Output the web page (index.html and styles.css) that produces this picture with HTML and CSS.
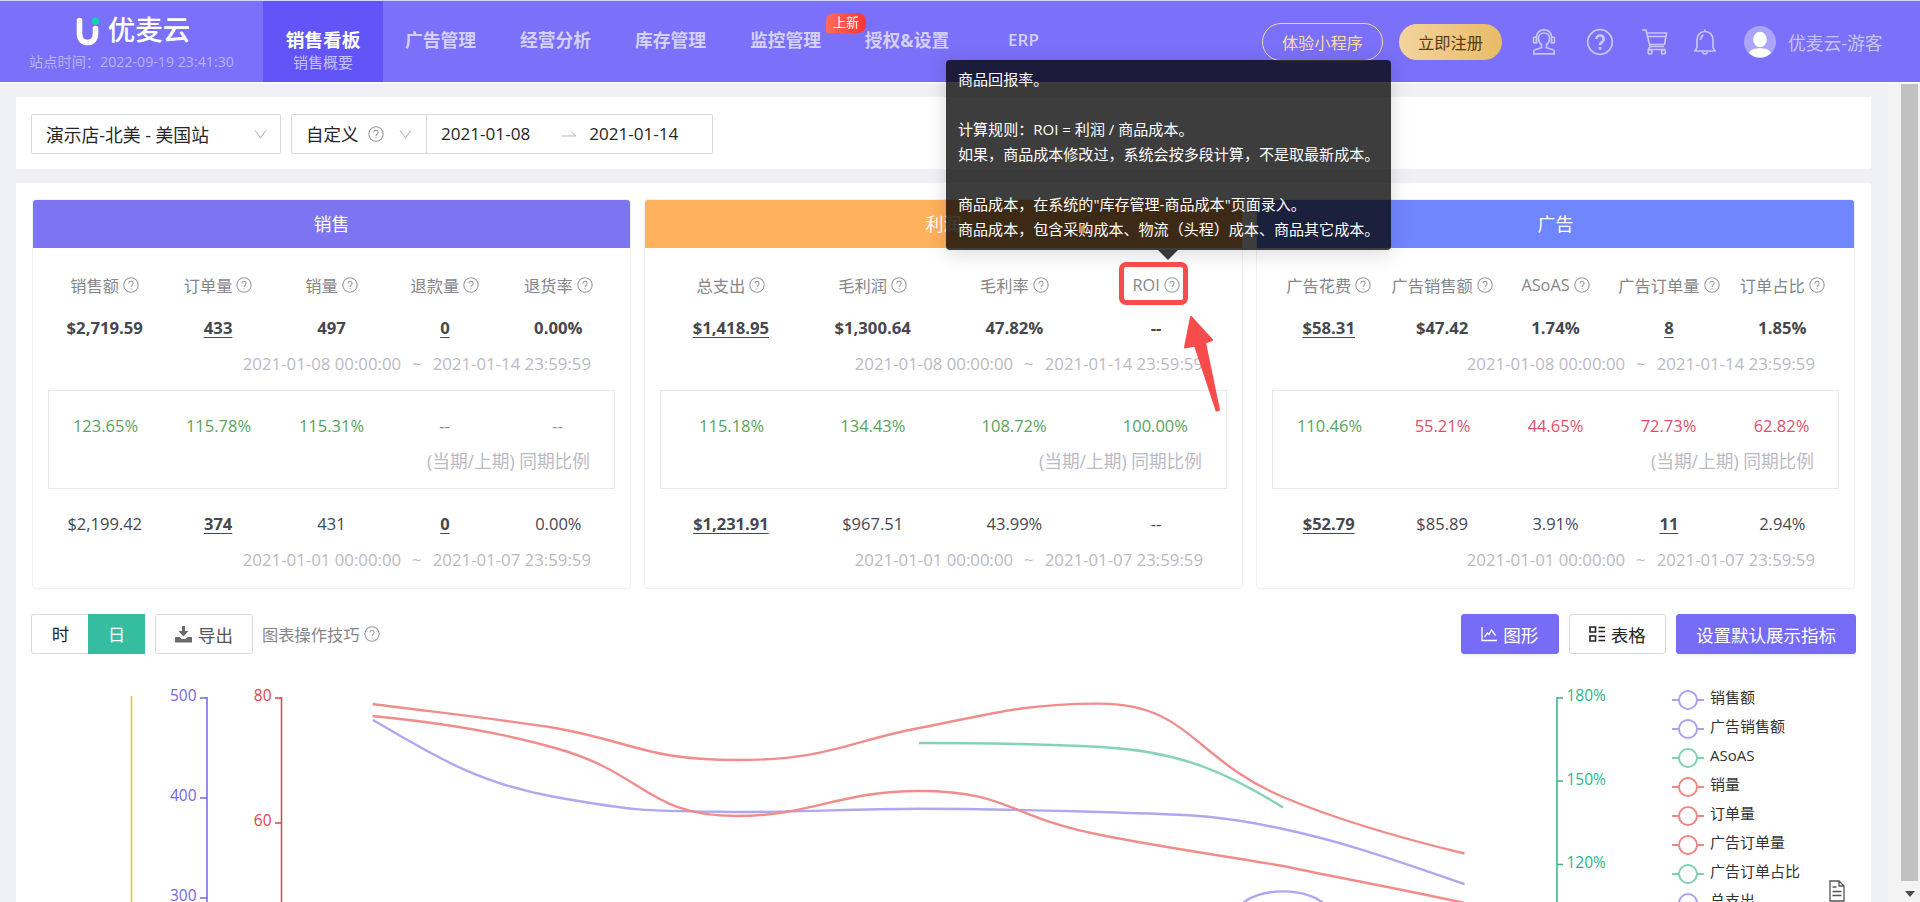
FILE: index.html
```html
<!DOCTYPE html>
<html lang="zh-CN">
<head>
    <meta charset="UTF-8">
    <meta name="viewport" content="width=device-width, initial-scale=1.0">
    <title>优麦云 - 销售看板</title>
    <link rel="stylesheet" href="styles.css">
</head>
<body>
    <svg class="symbols">
        <symbol id="help" viewBox="0 0 16 16">
            <circle cx="8" cy="8" r="7.2"/>
            <path d="M5.9 6.4a2.1 2.1 0 1 1 3.2 1.8C8.3 8.700 8 9.100 8 10"/>
            <path d="M8 11.200v1"/>
        </symbol>
        <symbol id="down" viewBox="0 0 14 10">
            <path d="M1 1l6 8 6-8"/>
        </symbol>
    </svg>

    <header class="header">
        <div class="brand">
            <div class="logo">
                <svg width="24" height="30" viewBox="0 0 24 30">
                    <path d="M3.500 3.500v13c0 5.500 3 9 8 9s8-3.500 8-9v-5" fill="none" stroke="#fff" stroke-width="5.600" stroke-linecap="round"/>
                    <circle cx="19.500" cy="4.200" r="3.600" fill="#10d3a6"/>
                </svg>
                <span>优麦云</span>
            </div>
            <div class="site-time">站点时间：2022-09-19 23:41:30</div>
        </div>
        <nav class="nav">
            <a class="nav-item active">销售看板<small>销售概要</small></a>
            <a class="nav-item">广告管理</a>
            <a class="nav-item">经营分析</a>
            <a class="nav-item">库存管理</a>
            <a class="nav-item">监控管理<span class="badge">上新</span></a>
            <a class="nav-item wide">授权&amp;设置</a>
            <a class="nav-item erp">ERP</a>
        </nav>
        <div class="header-right">
            <button class="btn-trial">体验小程序</button>
            <button class="btn-register">立即注册</button>
            <svg class="icon-service" width="24" height="28" viewBox="0 0 24 28">
                <path d="M9.500 16.500C7.300 15 6.500 13 6.500 10.500 6.500 7.200 8.500 5 12 5s5.500 2.200 5.500 5.500c0 2.500-.8 4.500-3 6v3.200l6.500 2c.9.300 1.200.8 1.200 1.600V25.800H1.800v-2.500c0-.8.300-1.300 1.200-1.600l6.500-2z"/>
                <path d="M4.500 9.500C4.500 4.500 7.500 1.800 12 1.800s7.500 2.700 7.500 7.700M4.500 9H3.200C2 9 1.500 9.800 1.500 11v2c0 1.200.5 2 1.700 2h1.300zM19.500 9h1.300c1.200 0 1.700.8 1.700 2v2c0 1.200-.5 2-1.700 2h-1.300z"/>
            </svg>
            <svg class="icon-question" width="28" height="28" viewBox="0 0 28 28">
                <circle cx="14" cy="14" r="12.300"/>
                <path d="M10.500 11a3.600 3.600 0 1 1 5.600 3c-1.500 1-2.100 1.700-2.100 3.200" stroke-width="2.800"/>
                <path d="M14 19v2.700" stroke-width="2.800"/>
            </svg>
            <svg class="icon-cart" width="26" height="28" viewBox="0 0 26 28">
                <path d="M0 2h4l4 16.500h14M5 5h19.500l-2 11.500H7.500M5.500 8.500H24M8 18.500l-1.500 3h17"/>
                <circle cx="8" cy="24" r="2"/>
                <circle cx="21.500" cy="24" r="2"/>
            </svg>
            <svg class="icon-bell" width="22" height="28" viewBox="0 0 22 28">
                <path d="M11 3.500c-4.800 0-8 3.500-8 8.500v7.500L1 23h20l-2-3.500V12c0-5-3.200-8.500-8-8.500zM11 1.500v2M8.500 24a2.600 2.600 0 0 0 5 0M6.500 12c0-2.500 1-4 3-5"/>
            </svg>
            <svg class="avatar" width="32" height="32" viewBox="0 0 32 32">
                <circle cx="16" cy="16" r="16" fill="#aaa5f8"/>
                <ellipse cx="16" cy="13.500" rx="6.800" ry="7.700" fill="#fff"/>
                <path d="M5 27c1.500-3.500 6-4.800 11-4.800S25.500 23.500 27 27c-3 3-6.800 4.500-11 4.500S8 30 5 27z" fill="#fff"/>
            </svg>
            <span class="user-name">优麦云-游客</span>
        </div>
    </header>

    <div class="page">
        <main class="main">
            <section class="filters">
                <div class="select store">
                    <span>演示店-北美 - 美国站</span>
                    <svg class="arrow-down"><use href="#down"/></svg>
                </div>
                <div class="select range">
                    <div class="range-type">
                        <span>自定义</span>
                        <svg class="help"><use href="#help"/></svg>
                        <svg class="arrow-down"><use href="#down"/></svg>
                    </div>
                    <div class="range-dates">
                        <span>2021-01-08</span>
                        <svg class="to" width="15" height="8" viewBox="0 0 15 8"><path d="M0 6h14L9.500 2"/></svg>
                        <span>2021-01-14</span>
                    </div>
                </div>
            </section>

            <section class="board">
                <div class="panels">
                    <div class="panel">
                        <h3 class="panel-title sale">销售</h3>
                        <div class="panel-body">
                            <div class="row labels">
                                <span>销售额<svg class="help"><use href="#help"/></svg></span>
                                <span>订单量<svg class="help"><use href="#help"/></svg></span>
                                <span>销量<svg class="help"><use href="#help"/></svg></span>
                                <span>退款量<svg class="help"><use href="#help"/></svg></span>
                                <span>退货率<svg class="help"><use href="#help"/></svg></span>
                            </div>
                            <div class="row values current">
                                <span>$2,719.59</span><span><a>433</a></span><span>497</span><span><a>0</a></span><span>0.00%</span>
                            </div>
                            <div class="date">2021-01-08 00:00:00<i>~</i>2021-01-14 23:59:59</div>
                            <div class="compare">
                                <div class="row up">
                                    <span>123.65%</span><span>115.78%</span><span>115.31%</span><span>--</span><span class="none">--</span>
                                </div>
                                <div class="ratio">(当期/上期) 同期比例</div>
                            </div>
                            <div class="row values">
                                <span>$2,199.42</span><span><a>374</a></span><span>431</span><span><a>0</a></span><span>0.00%</span>
                            </div>
                            <div class="date">2021-01-01 00:00:00<i>~</i>2021-01-07 23:59:59</div>
                        </div>
                    </div>

                    <div class="panel">
                        <h3 class="panel-title profit">利润</h3>
                        <div class="panel-body">
                            <div class="row labels">
                                <span>总支出<svg class="help"><use href="#help"/></svg></span>
                                <span>毛利润<svg class="help"><use href="#help"/></svg></span>
                                <span>毛利率<svg class="help"><use href="#help"/></svg></span>
                                <span>ROI<svg class="help"><use href="#help"/></svg></span>
                            </div>
                            <div class="row values current">
                                <span><a>$1,418.95</a></span><span>$1,300.64</span><span>47.82%</span><span>--</span>
                            </div>
                            <div class="date">2021-01-08 00:00:00<i>~</i>2021-01-14 23:59:59</div>
                            <div class="compare">
                                <div class="row up">
                                    <span>115.18%</span><span>134.43%</span><span>108.72%</span><span>100.00%</span>
                                </div>
                                <div class="ratio">(当期/上期) 同期比例</div>
                            </div>
                            <div class="row values">
                                <span><a>$1,231.91</a></span><span>$967.51</span><span>43.99%</span><span>--</span>
                            </div>
                            <div class="date">2021-01-01 00:00:00<i>~</i>2021-01-07 23:59:59</div>
                        </div>
                    </div>

                    <div class="panel">
                        <h3 class="panel-title ad">广告</h3>
                        <div class="panel-body">
                            <div class="row labels">
                                <span>广告花费<svg class="help"><use href="#help"/></svg></span>
                                <span>广告销售额<svg class="help"><use href="#help"/></svg></span>
                                <span>ASoAS<svg class="help"><use href="#help"/></svg></span>
                                <span>广告订单量<svg class="help"><use href="#help"/></svg></span>
                                <span>订单占比<svg class="help"><use href="#help"/></svg></span>
                            </div>
                            <div class="row values current">
                                <span><a>$58.31</a></span><span>$47.42</span><span>1.74%</span><span><a>8</a></span><span>1.85%</span>
                            </div>
                            <div class="date">2021-01-08 00:00:00<i>~</i>2021-01-14 23:59:59</div>
                            <div class="compare">
                                <div class="row down">
                                    <span class="up">110.46%</span><span>55.21%</span><span>44.65%</span><span>72.73%</span><span>62.82%</span>
                                </div>
                                <div class="ratio">(当期/上期) 同期比例</div>
                            </div>
                            <div class="row values">
                                <span><a>$52.79</a></span><span>$85.89</span><span>3.91%</span><span><a>11</a></span><span>2.94%</span>
                            </div>
                            <div class="date">2021-01-01 00:00:00<i>~</i>2021-01-07 23:59:59</div>
                        </div>
                    </div>
                </div>

                <div class="toolbar">
                    <div class="switch"><span>时</span><span class="on">日</span></div>
                    <button class="btn btn-export">
                        <svg width="17" height="17" viewBox="0 0 17 17"><path d="M7 0h3v5h3.500l-5 5.500-5-5.500H7zM0 11h4.500l2 2h4l2-2H17v5.500H0z" fill="#6b6b6b"/></svg>
                        导出
                    </button>
                    <span class="tips">图表操作技巧<svg class="help"><use href="#help"/></svg></span>
                    <div class="toolbar-right">
                        <button class="btn primary btn-view">
                            <svg width="16" height="15" viewBox="0 0 16 15"><path d="M1 0v13.500h15M3.500 10l3-4 1.500 1.500L10.500 3l4 5.500" fill="none" stroke="#fff" stroke-width="1.300"/></svg>
                            图形
                        </button>
                        <button class="btn btn-view">
                            <svg width="16" height="16" viewBox="0 0 16 16"><path d="M1 1h5.500v5H1zM1 10h5.500v5H1zM9.500 1.500H16M9.500 5.500H16M9.500 10.500H16M9.500 14.500H16" fill="none" stroke="#222" stroke-width="1.600"/></svg>
                            表格
                        </button>
                        <button class="btn primary btn-default">设置默认展示指标</button>
                    </div>
                </div>

                <div class="chart">
                    <svg class="plot" width="1640" height="229" viewBox="16 673 1640 229">
                        <path d="M131.500 696v206" stroke="#f0c30c" stroke-width="1.500"/>
                        <g stroke="#7467e0" fill="none" stroke-width="1.500">
                            <path d="M207 697v205M200 698h7M200 798h7M200 898h7"/>
                        </g>
                        <g stroke="#dd4344" fill="none" stroke-width="1.500">
                            <path d="M281.500 697v205M275 698h7M275 823h7"/>
                        </g>
                        <g stroke="#2bb68c" fill="none" stroke-width="1.500">
                            <path d="M1557 697v205M1557 698h6M1557 781h6M1557 864.500h6"/>
                        </g>
                        <g class="axis-text" text-anchor="end" fill="#7467e0">
                            <text x="196.500" y="701">500</text>
                            <text x="196.500" y="801">400</text>
                            <text x="196.500" y="901">300</text>
                        </g>
                        <g class="axis-text" text-anchor="end" fill="#dd4344">
                            <text x="271.500" y="701">80</text>
                            <text x="271.500" y="826">60</text>
                        </g>
                        <g class="axis-text" fill="#2bb68c">
                            <text x="1566.500" y="701">180%</text>
                            <text x="1566.500" y="785">150%</text>
                            <text x="1566.500" y="868">120%</text>
                        </g>
                        <g class="line">
                            <path class="c-purple" d="M373 720C434 756 480 784 555 797C640 812 646 811 737 812C810 812 846 809 919 808.700C992 808.700 1028 810 1101 812C1180 815 1210 813 1283 829C1345 842 1400 862 1464.500 884"/>
                            <path class="c-purple" d="M1240 906C1256 886.500 1310 886.500 1326 906"/>
                            <path class="c-green" d="M919 743C992 743 1040 744 1101 747C1180 751 1228 773 1283 807.500"/>
                            <path class="c-red" d="M372.500 704C425 711 500 719 555 728C634 742 646 760 737 760C828 760 846 742 919 728C992 714 1020 704 1098 703.600C1189 703 1192 758 1283 797C1340 821 1400 838 1464.500 853.500"/>
                            <path class="c-red" d="M372.500 716C434 722 500 732 555 748C646 773 646 816 737 816C810 816 840 791 919 791C1010 791 1010 818 1101 835C1160 847 1225 856 1283 866C1340 878 1400 889 1464.500 903"/>
                        </g>
                    </svg>
                    <ul class="legend">
                        <li class="c-purple"><i></i>销售额</li>
                        <li class="c-purple"><i></i>广告销售额</li>
                        <li class="c-green"><i></i>ASoAS</li>
                        <li class="c-red"><i></i>销量</li>
                        <li class="c-red"><i></i>订单量</li>
                        <li class="c-red"><i></i>广告订单量</li>
                        <li class="c-green"><i></i>广告订单占比</li>
                        <li class="c-purple"><i></i>总支出</li>
                    </ul>
                    <svg class="doc" width="16" height="22" viewBox="0 0 16 22">
                        <path d="M1 1h9l5 5v15H1zM10 1v5h5M3.500 7h4M3.500 11.500h9M3.500 15.500h9" fill="none" stroke="#555" stroke-width="1.300"/>
                    </svg>
                </div>
            </section>
        </main>
        <div class="scrollbar">
            <div class="thumb"></div>
            <svg width="10" height="6" viewBox="0 0 10 6"><path d="M0 0h10L5 6z" fill="#4d4d4d"/></svg>
        </div>
    </div>

    <!-- ROI 说明 -->
    <div class="tooltip">商品回报率。<br><br>计算规则：ROI = 利润 / 商品成本。<br>如果，商品成本修改过，系统会按多段计算，不是取最新成本。<br><br>商品成本，在系统的"库存管理-商品成本"页面录入。<br>商品成本，包含采购成本、物流（头程）成本、商品其它成本。</div>
    <div class="mark-box"></div>
    <svg class="mark-arrow" width="40" height="100" viewBox="1182 313 40 100">
        <path d="M1191 317L1212 340L1205 342.500L1219 410L1216.500 410.500L1195 345.500L1185 347.500Z" fill="#f84c4c" stroke="#f84c4c" stroke-width="2" stroke-linejoin="round"/>
    </svg>
</body>
</html>
```
FILE: styles.css
```css
* {
    box-sizing: border-box;
}
body {
    margin: 0;
    height: 902px;
    overflow: hidden;
    position: relative;
    font-family: 'Open Sans', 'Noto Sans CJK SC', sans-serif;
    font-size: 17.5px;
    color: #262626;
    background: #f0f1f4;
}
button {
    font-family: inherit;
    padding: 0;
    cursor: pointer;
}
.symbols {
    position: absolute;
    width: 0;
    height: 0;
}

/* header */
.header {
    display: flex;
    height: 82px;
    border-top: 1px solid #d5d6f8;
    background: #7a70f9;
    color: #fff;
}
.brand {
    width: 263px;
    text-align: center;
}
.logo {
    display: flex;
    align-items: center;
    justify-content: center;
    gap: 8px;
    height: 48px;
    padding-top: 10px;
    padding-left: 3px;
    font-size: 27.5px;
    line-height: 38px;
    font-weight: 500;
}
.logo svg {
    margin-top: 3px;
}
.site-time {
    font-size: 14.2px;
    line-height: 26px;
    color: #b9b4fc;
    white-space: nowrap;
}
.nav {
    display: flex;
}
.nav-item {
    position: relative;
    width: 115px;
    padding-top: 26px;
    text-align: center;
    font-size: 17.8px;
    line-height: 26px;
    font-weight: bold;
    color: #d3d0fd;
    white-space: nowrap;
}
.nav-item.active {
    width: 120px;
    background: #6255f8;
    color: #fff;
    font-size: 18.7px;
}
.nav-item small {
    display: block;
    font-size: 15px;
    line-height: 19px;
    font-weight: normal;
    color: #c5c1fd;
}
.nav-item.wide {
    width: 128px;
}
.nav-item.erp {
    width: 105px;
    font-size: 17px;
    font-weight: 600;
}
.badge {
    position: absolute;
    left: 98px;
    top: 12px;
    width: 40px;
    height: 20px;
    border-radius: 8px 8px 8px 1px;
    background: linear-gradient(90deg, #ff6b5c, #ff3434);
    color: #fff;
    font-size: 13px;
    line-height: 19px;
    font-weight: normal;
}
.header-right {
    display: flex;
    align-items: center;
    margin-left: auto;
    height: 82px;
    padding-right: 36px;
}
.header-right svg {
    fill: none;
    stroke: #c9c5fd;
    stroke-width: 1.7;
}
.header-right .avatar {
    stroke: none;
    margin-left: 28px;
}
.btn-trial {
    width: 121px;
    height: 38px;
    margin-right: 16px;
    border: 1px solid #f3d6a6;
    border-radius: 19px;
    background: none;
    color: #f8dba6;
    font-size: 16.25px;
}
.btn-register {
    width: 103px;
    height: 36px;
    margin-right: 30px;
    border: none;
    border-radius: 18px;
    background: linear-gradient(90deg, #f3d49e, #e9bb67);
    color: #573a12;
    font-size: 16.25px;
}
.icon-question {
    margin-left: 30px;
}
.icon-cart {
    margin-left: 28px;
}
.icon-bell {
    margin-left: 26px;
}
.user-name {
    width: 96px;
    margin-left: 12px;
    color: #c6c2fd;
    font-size: 17.8px;
    white-space: nowrap;
}

/* page */
.page {
    display: flex;
    height: 820px;
    border-top: 2px solid #fafafc;
}
.main {
    width: 1888px;
    padding: 13px 17px 0 16px;
}
.scrollbar {
    width: 32px;
    padding: 0 2px 0 13px;
    background: #f3f3f3;
    text-align: center;
    line-height: 10px;
}
.thumb {
    height: 797px;
    margin-bottom: 4px;
    background: #c1c1c1;
}
.help {
    width: 16px;
    height: 16px;
    fill: none;
    stroke: #9b9ba3;
    stroke-width: 1.1;
}
.arrow-down {
    width: 13px;
    height: 10px;
    fill: none;
    stroke: #bbb;
    stroke-width: 1.2;
}
.filters {
    display: flex;
    gap: 10px;
    height: 72px;
    padding: 17px 15px;
    background: #fff;
}
.select {
    display: flex;
    align-items: center;
    height: 40px;
    padding-bottom: 1px;
    border: 1px solid #d9d9d9;
    border-radius: 2px;
    white-space: nowrap;
}
.store {
    width: 250px;
    justify-content: space-between;
    padding: 0 13px 1px 14px;
    font-size: 17.8px;
}
.range {
    width: 422px;
}
.range-type {
    display: flex;
    align-items: center;
    width: 135px;
    height: 38px;
    padding-left: 14px;
    border-right: 1px solid #d9d9d9;
}
.range-type .help {
    margin: 0 15px 0 9px;
}
.range-dates {
    display: flex;
    align-items: center;
    padding-left: 14px;
    font-size: 17.1px;
}
.to {
    margin: 0 12px 0 32px;
    fill: none;
    stroke: #b5b5b5;
}

.board {
    height: 719px;
    margin-top: 14px;
    padding: 16px 15px 0;
    background: #fff;
}
.panels {
    display: flex;
    justify-content: space-between;
    padding: 0 1px;
}
.panel {
    width: 599px;
    height: 390px;
    border: 1px solid #f0f0f3;
    border-radius: 4px;
}
.panel-title {
    margin: 0;
    height: 48px;
    border-radius: 3px 3px 0 0;
    color: #fff;
    text-align: center;
    font-size: 18px;
    line-height: 48px;
    font-weight: normal;
}
.sale {
    background: #7d74f2;
}
.profit {
    background: #ffb15c;
}
.ad {
    background: #7086ff;
}
.panel-body {
    padding: 17px 15px 0;
}
.row {
    display: flex;
}
.row span {
    flex: 1 1 0;
    display: flex;
    align-items: center;
    justify-content: center;
    white-space: nowrap;
}
.labels {
    height: 40px;
    color: #85858a;
    font-size: 16.25px;
}
.labels .help {
    flex: none;
    margin-left: 4px;
}
.values {
    height: 44px;
    color: #45484e;
    font-size: 16.5px;
}
.values a {
    font-weight: bold;
    text-decoration: underline;
    text-underline-offset: 3px;
    text-decoration-thickness: 1px;
}
.current {
    font-weight: bold;
    font-size: 16.7px;
}
.date, .ratio {
    height: 30px;
    padding-right: 24px;
    text-align: right;
    color: #bbbac4;
    font-size: 16.8px;
    line-height: 30px;
}
.date i {
    margin: 0 11px;
    font-style: normal;
}
.compare {
    height: 99px;
    margin: 11px 0 12px;
    padding-top: 16px;
    border: 1px solid #e8e8ec;
}
.compare .row {
    height: 36px;
    font-size: 16.5px;
}
.compare .ratio {
    height: 36px;
    font-size: 17.7px;
    line-height: 36px;
}
.up, .down .up {
    color: #5aa35c;
}
.down {
    color: #e0506c;
}
.up .none {
    color: #8d9a90;
}

.toolbar {
    display: flex;
    align-items: center;
    height: 40px;
    margin-top: 25px;
}
.switch {
    display: flex;
    width: 114px;
    height: 40px;
    border: 1px solid #d9d9d9;
    border-radius: 3px;
    line-height: 38px;
    text-align: center;
}
.switch span {
    flex: 1;
}
.switch .on {
    margin: -1px;
    line-height: 40px;
    background: #35bda1;
    color: #fff;
}
.btn {
    display: flex;
    align-items: center;
    justify-content: center;
    gap: 6px;
    height: 40px;
    border: 1px solid #d9d9d9;
    border-radius: 3px;
    background: #fff;
    color: #262626;
    font-size: 17.5px;
}
.btn.primary {
    border-color: #776cf8;
    background: #776cf8;
    color: #fff;
    box-shadow: 0 2px 2px rgba(0, 0, 0, 0.05);
}
.btn-export {
    width: 98px;
    margin-left: 10px;
    color: #555;
}
.tips {
    display: flex;
    align-items: center;
    gap: 4px;
    margin-left: 9px;
    color: #85858a;
    font-size: 16.25px;
}
.toolbar-right {
    display: flex;
    gap: 10px;
    margin-left: auto;
}
.btn-view {
    width: 97.5px;
}
.btn-default {
    width: 180px;
}

/* chart */
.chart {
    display: flex;
    height: 229px;
    margin: 19px -15px 0;
    overflow: hidden;
}
.plot {
    flex: none;
}
.axis-text {
    font-size: 15.5px;
}
.line path {
    fill: none;
    stroke: currentColor;
    stroke-width: 2.4;
    opacity: 0.95;
}
.c-purple {
    color: #aaa2f0;
}
.c-green {
    color: #80d0b5;
}
.c-red {
    color: #ef8785;
}
.legend {
    flex: none;
    width: 173px;
    margin: 0;
    padding: 10px 0 0 16px;
    list-style: none;
}
.legend li {
    display: flex;
    align-items: center;
    height: 29px;
    font-size: 15px;
    line-height: 29px;
    color: #333;
    white-space: nowrap;
}
.legend i {
    display: flex;
    justify-content: center;
    align-items: center;
    width: 32px;
    height: 2px;
    margin: 4px 6px 0 0;
    background: #aaa2f0;
}
.legend i::before {
    content: '';
    flex: none;
    width: 16px;
    height: 16px;
    border: 2.5px solid #aaa2f0;
    border-radius: 50%;
    background: #fff;
}
.legend .c-green i {
    background: #80d0b5;
}
.legend .c-green i::before {
    border-color: #80d0b5;
}
.legend .c-red i {
    background: #ef8785;
}
.legend .c-red i::before {
    border-color: #ef8785;
}
.doc {
    margin-top: 207px;
}

/* tooltip */
.tooltip {
    position: absolute;
    left: 946px;
    top: 60px;
    width: 445px;
    height: 190px;
    padding: 7px 12px;
    border-radius: 4px;
    background: rgba(0, 0, 0, 0.76);
    box-shadow: 0 4px 20px rgba(0, 0, 0, 0.15);
    color: #fff;
    font-size: 15.050px;
    line-height: 25px;
    white-space: nowrap;
}
.tooltip::after {
    content: '';
    position: absolute;
    left: 212px;
    top: 190px;
    border: 10px solid transparent;
    border-top-color: rgba(0, 0, 0, 0.76);
    border-bottom: 0;
}
.mark-box {
    position: absolute;
    left: 1119px;
    top: 262px;
    width: 69px;
    height: 43px;
    border: 5px solid #f84c4c;
    border-radius: 7px;
}
.mark-arrow {
    position: absolute;
    left: 1182px;
    top: 313px;
}
```
